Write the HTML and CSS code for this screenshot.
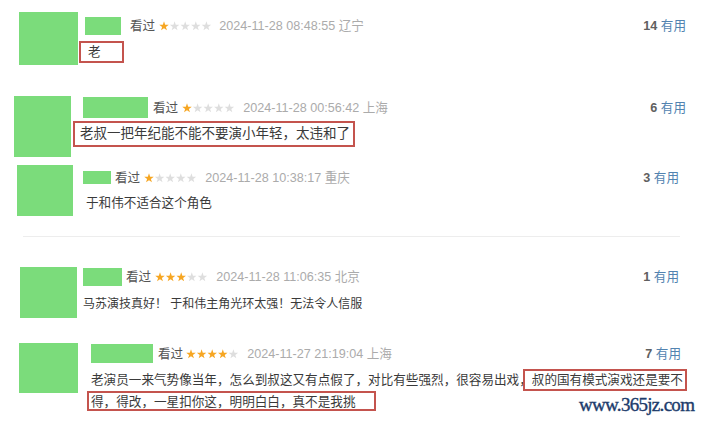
FILE: index.html
```html
<!DOCTYPE html>
<html lang="zh-CN">
<head>
<meta charset="utf-8">
<title>短评</title>
<link rel="stylesheet" href="styles.css">
</head>
<body>
<svg class="defs" width="0" height="0" aria-hidden="true">
  <defs>
    <symbol id="st" viewBox="0 0 10 10">
      <polygon points="5,0.3 6.18,3.68 9.76,3.76 6.9,5.92 7.94,9.35 5,7.3 2.06,9.35 3.1,5.92 0.24,3.76 3.82,3.68"/>
    </symbol>
  </defs>
</svg>
<div class="list">
  <div class="row r1">
    <div class="avatar"></div>
    <div class="main">
      <div class="meta">
        <span class="name"></span>
        <span class="status">看过</span>
        <svg class="stars" width="53" height="10" viewBox="0 0 53 10"><use href="#st" x="0" width="10" height="10" class="on"/><use href="#st" x="10.6" width="10" height="10" class="off"/><use href="#st" x="21.2" width="10" height="10" class="off"/><use href="#st" x="31.8" width="10" height="10" class="off"/><use href="#st" x="42.4" width="10" height="10" class="off"/></svg>
        <span class="time">2024-11-28 08:48:55 辽宁</span>
        <span class="votes"><b>14</b> <a>有用</a></span>
      </div>
      <div class="comment"><span class="box">老</span></div>
    </div>
  </div>

  <div class="row r2">
    <div class="avatar"></div>
    <div class="main">
      <div class="meta">
        <span class="name"></span>
        <span class="status">看过</span>
        <svg class="stars" width="53" height="10" viewBox="0 0 53 10"><use href="#st" x="0" width="10" height="10" class="on"/><use href="#st" x="10.6" width="10" height="10" class="off"/><use href="#st" x="21.2" width="10" height="10" class="off"/><use href="#st" x="31.8" width="10" height="10" class="off"/><use href="#st" x="42.4" width="10" height="10" class="off"/></svg>
        <span class="time">2024-11-28 00:56:42 上海</span>
        <span class="votes"><b>6</b> <a>有用</a></span>
      </div>
      <div class="comment"><span class="box">老叔一把年纪能不能不要演小年轻，太违和了</span></div>
    </div>
  </div>

  <div class="row r3">
    <div class="avatar"></div>
    <div class="main">
      <div class="meta">
        <span class="name"></span>
        <span class="status">看过</span>
        <svg class="stars" width="53" height="10" viewBox="0 0 53 10"><use href="#st" x="0" width="10" height="10" class="on"/><use href="#st" x="10.6" width="10" height="10" class="off"/><use href="#st" x="21.2" width="10" height="10" class="off"/><use href="#st" x="31.8" width="10" height="10" class="off"/><use href="#st" x="42.4" width="10" height="10" class="off"/></svg>
        <span class="time">2024-11-28 10:38:17 重庆</span>
        <span class="votes"><b>3</b> <a>有用</a></span>
      </div>
      <div class="comment">于和伟不适合这个角色</div>
    </div>
  </div>

  <div class="sep"></div>

  <div class="row r4">
    <div class="avatar"></div>
    <div class="main">
      <div class="meta">
        <span class="name"></span>
        <span class="status">看过</span>
        <svg class="stars" width="53" height="10" viewBox="0 0 53 10"><use href="#st" x="0" width="10" height="10" class="on"/><use href="#st" x="10.6" width="10" height="10" class="on"/><use href="#st" x="21.2" width="10" height="10" class="on"/><use href="#st" x="31.8" width="10" height="10" class="off"/><use href="#st" x="42.4" width="10" height="10" class="off"/></svg>
        <span class="time">2024-11-28 11:06:35 北京</span>
        <span class="votes"><b>1</b> <a>有用</a></span>
      </div>
      <div class="comment">马苏演技真好！ 于和伟主角光环太强！无法令人信服</div>
    </div>
  </div>

  <div class="row r5">
    <div class="avatar"></div>
    <div class="main">
      <div class="meta">
        <span class="name"></span>
        <span class="status">看过</span>
        <svg class="stars" width="53" height="10" viewBox="0 0 53 10"><use href="#st" x="0" width="10" height="10" class="on"/><use href="#st" x="10.6" width="10" height="10" class="on"/><use href="#st" x="21.2" width="10" height="10" class="on"/><use href="#st" x="31.8" width="10" height="10" class="on"/><use href="#st" x="42.4" width="10" height="10" class="off"/></svg>
        <span class="time">2024-11-27 21:19:04 上海</span>
        <span class="votes"><b>7</b> <a>有用</a></span>
      </div>
      <div class="comment">
        <div class="line">老演员一来气势像当年，怎么到叔这又有点假了，对比有些强烈，很容易出戏，<span class="mark m1">叔的国有模式演戏还是要不</span></div>
        <div class="line"><span class="mark m2">得，得改，一星扣你这，明明白白，真不是我挑</span></div>
      </div>
    </div>
  </div>
</div>
<div class="watermark">www.365jz.com</div>
</body>
</html>
```
FILE: styles.css
```css
html, body {
  margin: 0;
  padding: 0;
  background: #ffffff;
}

body {
  width: 701px;
  height: 421px;
  overflow: hidden;
  position: relative;
  font-family: "Liberation Sans", "Noto Sans CJK SC", sans-serif;
  font-size: 12.6px;
  color: #3a3a3a;
}

.defs {
  position: absolute;
  width: 0;
  height: 0;
}

.list {
  display: flex;
  flex-direction: column;
}

.row {
  display: flex;
  align-items: flex-start;
}

.avatar {
  flex: none;
  background: #7bdc7b;
}

.main {
  flex: 1;
  display: flex;
  flex-direction: column;
  min-width: 0;
}

.meta {
  display: flex;
  align-items: center;
  line-height: 18px;
  white-space: nowrap;
}

.name {
  flex: none;
  background: #7bdc7b;
}

.status {
  color: #555555;
}

.stars {
  flex: none;
  display: block;
}

.stars .on {
  fill: #f6a623;
}

.stars .off {
  fill: #dedede;
}

.time {
  color: #ababab;
}

.votes {
  margin-left: auto;
  color: #5a5a5a;
}

.votes b {
  font-weight: bold;
  color: #606060;
}

.votes a {
  color: #5283b0;
}

.comment {
  line-height: 18px;
  white-space: nowrap;
}

.box {
  display: inline-block;
  box-sizing: border-box;
  border: 2px solid #c4544e;
}

.mark {
  border: 2px solid #c4544e;
}

/* row 1 */
.r1 {
  padding: 12px 15px 0 19px;
}
.r1 .avatar { width: 59px; height: 53px; }
.r1 .main { margin-left: 7px; }
.r1 .meta { margin-top: 5px; height: 18px; }
.r1 .name { width: 36px; height: 18px; }
.r1 .status { margin-left: 9px; }
.r1 .stars { margin-left: 4px; }
.r1 .time { margin-left: 7px; }
.r1 .comment { margin-top: 6px; margin-left: -6px; }
.r1 .box { width: 45px; height: 22px; padding-left: 7px; line-height: 18px; }

/* row 2 */
.r2 {
  margin-top: 31px;
  padding: 0 15px 0 14px;
}
.r2 .avatar { width: 57px; height: 61px; }
.r2 .main { margin-left: 12px; }
.r2 .meta { margin-top: 1px; height: 21px; }
.r2 .name { width: 65px; height: 21px; }
.r2 .status { margin-left: 5px; }
.r2 .stars { margin-left: 4px; }
.r2 .time { margin-left: 8px; }
.r2 .comment { margin-top: 3px; margin-left: -10px; }
.r2 .box { width: 282px; height: 26px; padding-left: 5px; font-size: 13.5px; line-height: 22px; }

/* row 3 */
.r3 {
  margin-top: 8px;
  padding: 0 22px 0 17px;
}
.r3 .avatar { width: 56px; height: 51px; }
.r3 .main { margin-left: 10px; }
.r3 .meta { margin-top: 6px; height: 13px; }
.r3 .name { width: 28px; height: 13px; }
.r3 .status { margin-left: 4px; }
.r3 .stars { margin-left: 4px; }
.r3 .time { margin-left: 8px; }
.r3 .comment { margin-top: 10px; margin-left: 3px; }

.sep {
  margin: 20px 0 0 23px;
  width: 657px;
  height: 1px;
  background: #ededed;
}

/* row 4 */
.r4 {
  margin-top: 30px;
  padding: 0 22px 0 20px;
}
.r4 .avatar { width: 57px; height: 51px; }
.r4 .main { margin-left: 6px; }
.r4 .meta { margin-top: 1px; height: 18px; }
.r4 .name { width: 39px; height: 18px; }
.r4 .status { margin-left: 4px; }
.r4 .stars { margin-left: 4px; }
.r4 .time { margin-left: 8px; }
.r4 .comment { margin-top: 9px; font-size: 12px; }

/* row 5 */
.r5 {
  margin-top: 25px;
  padding: 0 20px 0 19px;
}
.r5 .avatar { width: 59px; height: 50px; }
.r5 .main { margin-left: 13px; }
.r5 .meta { margin-top: 1px; height: 19px; }
.r5 .name { width: 62px; height: 19px; }
.r5 .status { margin-left: 5px; }
.r5 .stars { margin-left: 3px; }
.r5 .time { margin-left: 8px; }
.r5 .comment { margin-top: 6px; line-height: 22px; }

.m1 {
  padding: 2px 2px 2px 7px;
  margin: 0 -4px 0 -9px;
}

.m2 {
  padding: 2px 19px 0 2px;
  margin: 0 -21px 0 -4px;
}

.watermark {
  position: absolute;
  left: 579px;
  top: 394px;
  font-family: "Liberation Serif", serif;
  font-size: 19px;
  letter-spacing: -0.7px;
  -webkit-text-stroke: 0.4px #1d3c6c;
  color: #1d3c6c;
  line-height: 22px;
}
```
